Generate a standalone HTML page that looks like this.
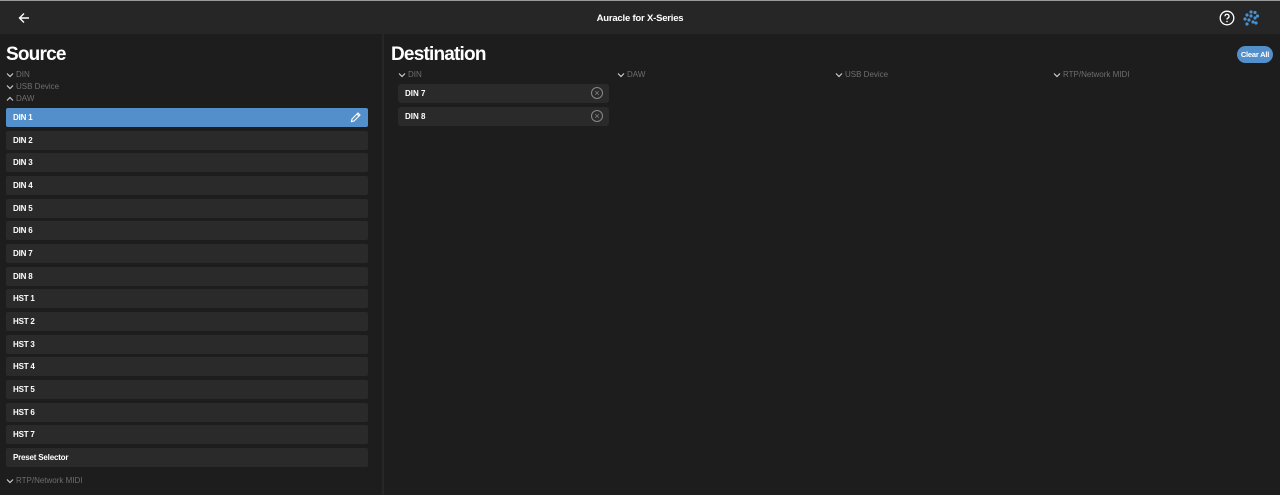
<!DOCTYPE html>
<html><head><style>
body{margin:0;width:1280px;height:495px;background:#1d1d1d;font-family:"Liberation Sans",sans-serif;color:#fff;overflow:hidden;position:relative}
.top{position:absolute;left:0;top:0;width:1280px;height:1px;background:#9a9a9a}
.hdr{position:absolute;left:0;top:1px;width:1280px;height:33px;background:#262626}
.title{position:absolute;left:0;width:1280px;top:12px;text-align:center;font-size:9.5px;font-weight:bold;letter-spacing:-0.2px}
.div{position:absolute;left:382px;top:34px;width:2px;height:461px;background:#262626}
h1{position:absolute;margin:0;font-size:19px;font-weight:bold;letter-spacing:-0.8px}
.cat{position:absolute;font-size:8px;color:#6e6e6e;padding-left:10px}
.cat svg{position:absolute;left:0;top:2px}
.row{position:absolute;left:6px;width:362px;height:19px;background:#2a2a2a;border-radius:2px;font-size:8px;font-weight:bold;line-height:19px;text-indent:7px;letter-spacing:-0.2px}
.sel{background:#5390cb}
.drow{position:absolute;left:398px;width:211px;height:19px;background:#2a2a2a;border-radius:3px;font-size:8px;font-weight:bold;line-height:19px;text-indent:7px}
.x{position:absolute;right:6px;top:3px;width:10px;height:10px;border:1.2px solid #888;border-radius:50%;color:#888;font-size:9px;line-height:10px;text-align:center;text-indent:0;font-weight:normal}
.btn{position:absolute;left:1237px;top:46px;width:36px;height:17px;border-radius:9px;background:#5390cb;font-size:7.5px;font-weight:bold;line-height:17px;text-align:center;letter-spacing:-0.2px}
</style></head><body>
<div class="top"></div>
<div class="hdr">
<svg style="position:absolute;left:18px;top:11px" width="12" height="12" viewBox="0 0 12 12"><path d="M11 6H1.5M6 1.5L1.5 6 6 10.5" stroke="#fff" stroke-width="1.4" fill="none"/></svg>
<div class="title">Auracle for X-Series</div>
<svg style="position:absolute;left:1219px;top:9px" width="16" height="16" viewBox="0 0 16 16"><circle cx="8" cy="8" r="6.8" stroke="#fff" stroke-width="1.3" fill="none"/><path d="M6 6.3a2 2 0 1 1 2.8 1.8C8.2 8.4 8 8.8 8 9.5" stroke="#fff" stroke-width="1.3" fill="none"/><circle cx="8" cy="11.5" r=".8" fill="#fff"/></svg>
<svg style="position:absolute;left:1242px;top:8px" width="18" height="18" viewBox="0 0 18 18" fill="#4a90d0"><circle cx="9" cy="3" r="1.6"/><circle cx="13" cy="3.5" r="1.6"/><circle cx="15.5" cy="7" r="1.6"/><circle cx="5" cy="6" r="1.6"/><circle cx="9" cy="7" r="1.6"/><circle cx="13" cy="9" r="1.6"/><circle cx="3" cy="10" r="1.6"/><circle cx="7" cy="11" r="1.6"/><circle cx="11" cy="13" r="1.6"/><circle cx="5" cy="15" r="1.6"/><circle cx="14" cy="14" r="1.6"/></svg>
</div>
<div class="div"></div>
<h1 style="left:6px;top:44px">Source</h1>
<div class="cat" style="left:6px;top:70px"><svg width="8" height="6" viewBox="0 0 8 6"><path d="M1 1.5l3 3 3-3" stroke="#ccc" stroke-width="1.2" fill="none"/></svg>DIN</div>
<div class="cat" style="left:6px;top:82px"><svg width="8" height="6" viewBox="0 0 8 6"><path d="M1 1.5l3 3 3-3" stroke="#ccc" stroke-width="1.2" fill="none"/></svg>USB Device</div>
<div class="cat" style="left:6px;top:94px"><svg width="8" height="6" viewBox="0 0 8 6"><path d="M1 4.5l3-3 3 3" stroke="#ccc" stroke-width="1.2" fill="none"/></svg>DAW</div>
<div class="row sel" style="top:108px">DIN 1<svg style="position:absolute;right:7px;top:4px" width="11" height="11" viewBox="0 0 11 11"><path d="M1.5 9.5l.5-2.5 6-6 2 2-6 6zM7 2l2 2" stroke="#fff" stroke-width="1.1" fill="none"/></svg></div>
<div class="row" style="top:131px">DIN 2</div>
<div class="row" style="top:153px">DIN 3</div>
<div class="row" style="top:176px">DIN 4</div>
<div class="row" style="top:199px">DIN 5</div>
<div class="row" style="top:221px">DIN 6</div>
<div class="row" style="top:244px">DIN 7</div>
<div class="row" style="top:267px">DIN 8</div>
<div class="row" style="top:289px">HST 1</div>
<div class="row" style="top:312px">HST 2</div>
<div class="row" style="top:335px">HST 3</div>
<div class="row" style="top:357px">HST 4</div>
<div class="row" style="top:380px">HST 5</div>
<div class="row" style="top:403px">HST 6</div>
<div class="row" style="top:425px">HST 7</div>
<div class="row" style="top:448px">Preset Selector</div>
<div class="cat" style="left:6px;top:476px"><svg width="8" height="6" viewBox="0 0 8 6"><path d="M1 1.5l3 3 3-3" stroke="#ccc" stroke-width="1.2" fill="none"/></svg>RTP/Network MIDI</div>
<h1 style="left:391px;top:44px">Destination</h1>
<div class="btn">Clear All</div>
<div class="cat" style="left:398px;top:70px"><svg width="8" height="6" viewBox="0 0 8 6"><path d="M1 1.5l3 3 3-3" stroke="#ccc" stroke-width="1.2" fill="none"/></svg>DIN</div>
<div class="cat" style="left:617px;top:70px"><svg width="8" height="6" viewBox="0 0 8 6"><path d="M1 1.5l3 3 3-3" stroke="#ccc" stroke-width="1.2" fill="none"/></svg>DAW</div>
<div class="cat" style="left:835px;top:70px"><svg width="8" height="6" viewBox="0 0 8 6"><path d="M1 1.5l3 3 3-3" stroke="#ccc" stroke-width="1.2" fill="none"/></svg>USB Device</div>
<div class="cat" style="left:1053px;top:70px"><svg width="8" height="6" viewBox="0 0 8 6"><path d="M1 1.5l3 3 3-3" stroke="#ccc" stroke-width="1.2" fill="none"/></svg>RTP/Network MIDI</div>
<div class="drow" style="top:84px">DIN 7<span class="x">×</span></div>
<div class="drow" style="top:107px">DIN 8<span class="x">×</span></div>
</body></html>
